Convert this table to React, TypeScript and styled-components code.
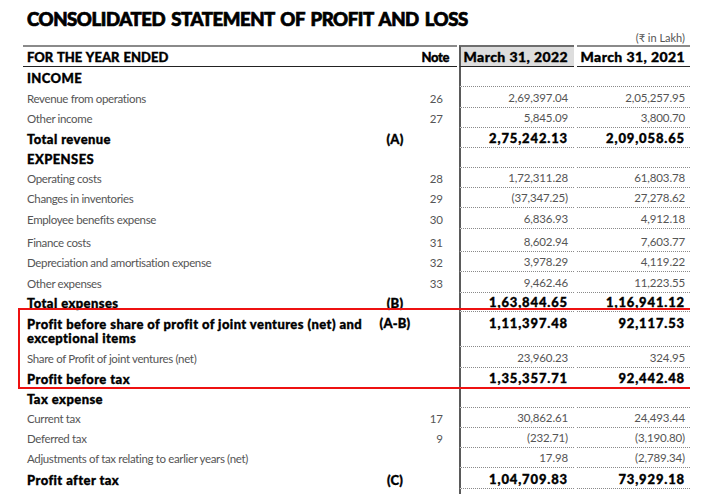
import React from "react";
import styled, { createGlobalStyle, css } from "styled-components";

const Global = createGlobalStyle`
  html, body { margin: 0; padding: 0; background: #fff; }
  body { font-family: Lato, "Noto Sans", "DejaVu Sans", sans-serif; }
`;

const Page = styled.div`
  width: 667px;
  padding-left: 23px;
  height: 494px;
  overflow: hidden;
`;

const TitleBlock = styled.div`
  padding: 7px 0 0 4px;
`;

const Title = styled.h1`
  margin: 0;
  font-family: Lato, sans-serif;
  font-weight: 900;
  font-size: 18.6px;
  line-height: 24px;
  color: #000;
  letter-spacing: -0.45px;
  word-spacing: 2px;
  -webkit-text-stroke: 0.7px #000;
`;

const Unit = styled.div`
  height: 14px;
  line-height: 14px;
  font-size: 11px;
  font-weight: 400;
  color: #555;
  text-align: right;
  padding-right: 5px;
`;

const Grid = styled.div`
  display: grid;
  grid-template-columns: 347px 50px 39px 115px 116px;
  align-items: stretch;
`;

const HeaderRow = styled(Grid)`
  height: 22px;
  font-weight: 900;
  color: #000;
  -webkit-text-stroke: 0.35px #000;
`;

const HeadLeft = styled.div`
  grid-column: 1 / 4;
  margin-right: 2px;
  border-top: 2px solid #8a8a8a;
  border-bottom: 1px solid #222;
  display: flex;
  align-items: center;
  justify-content: space-between;
  padding: 0 8px 0 4px;
  font-size: 13px;
  letter-spacing: 0px;
  word-spacing: 1px;
`;

const HeadNote = styled.span`
  letter-spacing: -0.4px;
`;

const HeadCol = styled.div<{ $shaded?: boolean }>`
  border-top: 2px solid ${(p) => (p.$shaded ? "#6e6e6e" : "#8a8a8a")};
  border-bottom: 1px solid #222;
  display: flex;
  align-items: center;
  justify-content: flex-end;
  font-size: 14px;
  letter-spacing: 0.4px;
  ${(p) =>
    p.$shaded
      ? css`
          background: #dddddd;
          border-left: 2px solid #5a5a5a;
          padding-right: 6px;
        `
      : css`
          margin-left: 3px;
          padding-right: 5px;
        `}
`;

const Row = styled(Grid)<{ $h: number; $strong: boolean }>`
  height: ${(p) => p.$h}px;
  line-height: 14px;
  ${(p) =>
    p.$strong
      ? css`
          color: #000;
          font-weight: 900;
          font-size: 13px;
          letter-spacing: 0.42px;
          -webkit-text-stroke: 0.35px #000;
        `
      : css`
          color: #555;
          font-weight: 400;
          font-size: 11.5px;
          letter-spacing: -0.35px;
        `}
`;

const Cell = styled.div<{ $top?: boolean }>`
  display: flex;
  align-items: ${(p) => (p.$top ? "flex-start" : "flex-end")};
  padding-bottom: 2px;
  padding-top: ${(p) => (p.$top ? "4px" : "0")};
  box-sizing: border-box;
`;

const Label = styled(Cell)`
  padding-left: 4px;
`;

const Mid = styled(Cell)`
  justify-content: center;
  letter-spacing: 0.2px;
`;

const Note = styled(Cell)`
  justify-content: flex-end;
  padding-right: 16px;
  font-size: 11.5px;
  letter-spacing: 0;
`;

const Val = styled(Cell)<{ $first?: boolean; $strong?: boolean }>`
  justify-content: flex-end;
  border-bottom: 1px dotted #8a8a8a;
  ${(p) =>
    p.$strong
      ? css`
          letter-spacing: 0.85px;
        `
      : css`
          font-size: 11.5px;
          letter-spacing: -0.15px;
        `}
  ${(p) =>
    p.$first
      ? css`
          border-left: 2px solid #5a5a5a;
          padding-right: 6px;
        `
      : css`
          margin-left: 3px;
          padding-right: 5px;
        `}
`;

const Highlight = styled.div`
  position: relative;
  &::after {
    content: "";
    position: absolute;
    top: -4px;
    bottom: -1px;
    left: -5px;
    right: -4px;
    border: 2px solid #ee1111;
    pointer-events: none;
  }
`;

type Line = {
  label: string;
  strong?: boolean;
  mid?: string;
  note?: string;
  a?: string;
  b?: string;
  h: number;
  multi?: boolean;
};

const before: Line[] = [
  { label: "INCOME", strong: true, h: 20 },
  { label: "Revenue from operations", note: "26", a: "2,69,397.04", b: "2,05,257.95", h: 21 },
  { label: "Other income", note: "27", a: "5,845.09", b: "3,800.70", h: 20 },
  { label: "Total revenue", strong: true, mid: "(A)", a: "2,75,242.13", b: "2,09,058.65", h: 20 },
  { label: "EXPENSES", strong: true, h: 20 },
  { label: "Operating costs", note: "28", a: "1,72,311.28", b: "61,803.78", h: 20 },
  { label: "Changes in inventories", note: "29", a: "(37,347.25)", b: "27,278.62", h: 20 },
  { label: "Employee benefits expense", note: "30", a: "6,836.93", b: "4,912.18", h: 21 },
  { label: "Finance costs", note: "31", a: "8,602.94", b: "7,603.77", h: 23 },
  { label: "Depreciation and amortisation expense", note: "32", a: "3,978.29", b: "4,119.22", h: 20 },
  { label: "Other expenses", note: "33", a: "9,462.46", b: "11,223.55", h: 21 },
  { label: "Total expenses", strong: true, mid: "(B)", a: "1,63,844.65", b: "1,16,941.12", h: 19 },
];

const boxed: Line[] = [
  {
    label: "Profit before share of profit of joint ventures (net) and exceptional items",
    strong: true,
    mid: "(A-B)",
    a: "1,11,397.48",
    b: "92,117.53",
    h: 35,
    multi: true,
  },
  { label: "Share of Profit of joint ventures (net)", a: "23,960.23", b: "324.95", h: 21 },
  { label: "Profit before tax", strong: true, a: "1,35,357.71", b: "92,442.48", h: 20 },
];

const after: Line[] = [
  { label: "Tax expense", strong: true, h: 20 },
  { label: "Current tax", note: "17", a: "30,862.61", b: "24,493.44", h: 20 },
  { label: "Deferred tax", note: "9", a: "(232.71)", b: "(3,190.80)", h: 20 },
  { label: "Adjustments of tax relating to earlier years (net)", a: "17.98", b: "(2,789.34)", h: 20 },
  { label: "Profit after tax", strong: true, mid: "(C)", a: "1,04,709.83", b: "73,929.18", h: 21 },
  { label: "Other comprehensive income", strong: true, h: 20 },
];

const StatementRow: React.FC<{ line: Line }> = ({ line }) => (
  <Row $h={line.h} $strong={!!line.strong}>
    <Label>{line.label}</Label>
    <Mid $top={line.multi}>{line.mid}</Mid>
    <Note $top={line.multi}>{line.note}</Note>
    <Val $first $strong={line.strong} $top={line.multi}>{line.a}</Val>
    <Val $strong={line.strong} $top={line.multi}>{line.b}</Val>
  </Row>
);

export default function App() {
  return (
    <Page>
      <Global />
      <TitleBlock>
        <Title>CONSOLIDATED STATEMENT OF PROFIT AND LOSS</Title>
      </TitleBlock>
      <Unit>(₹ in Lakh)</Unit>
      <HeaderRow>
        <HeadLeft>
          <span>FOR THE YEAR ENDED</span>
          <HeadNote>Note</HeadNote>
        </HeadLeft>
        <HeadCol $shaded>March 31, 2022</HeadCol>
        <HeadCol>March 31, 2021</HeadCol>
      </HeaderRow>
      {before.map((l, i) => (
        <StatementRow key={"a" + i} line={l} />
      ))}
      <Highlight>
        {boxed.map((l, i) => (
          <StatementRow key={"b" + i} line={l} />
        ))}
      </Highlight>
      {after.map((l, i) => (
        <StatementRow key={"c" + i} line={l} />
      ))}
    </Page>
  );
}
